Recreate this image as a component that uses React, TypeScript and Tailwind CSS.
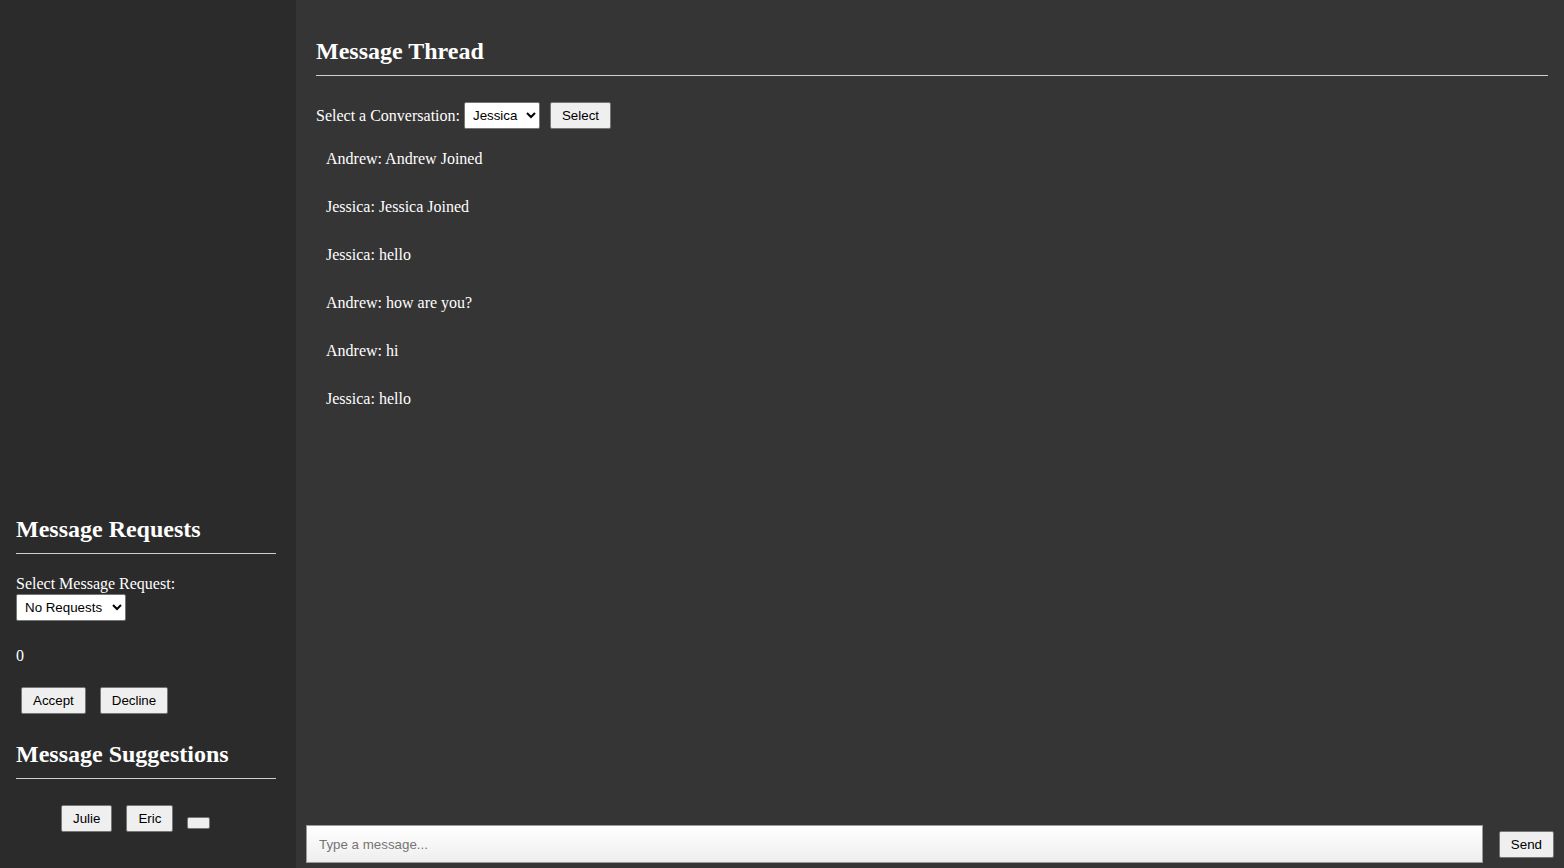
import { useState } from "react";

const serif = "font-['Liberation_Serif','Times_New_Roman',serif]";
const sans = "font-['Liberation_Sans',Arial,sans-serif]";
const btn =
  "bg-[#efefef] border border-[#767676] rounded-[2px] text-black text-[13.333px] leading-[15px] px-[11px] py-[5px] " +
  sans;

const messages = [
  { from: "Andrew", text: "Andrew Joined" },
  { from: "Jessica", text: "Jessica Joined" },
  { from: "Jessica", text: "hello" },
  { from: "Andrew", text: "how are you?" },
  { from: "Andrew", text: "hi" },
  { from: "Jessica", text: "hello" },
];

export default function App() {
  const [draft, setDraft] = useState("");

  return (
    <div className={`flex h-screen w-full overflow-hidden text-white ${serif}`}>
      <aside className="w-[296px] shrink-0 bg-[#2b2b2b] flex flex-col justify-end pl-4 pr-5 pb-[36px]">
        <h2 className="text-2xl font-bold leading-7 pb-[10px] border-b border-[#cfcfcf]">Message Requests</h2>
        <label className="block mt-[21px] text-base leading-[18px]">Select Message Request:</label>
        <select
          className={`mt-[1px] w-[110px] h-[27px] bg-white text-black border border-[#767676] rounded-[2px] text-[13.333px] px-1 ${sans}`}
        >
          <option>No Requests</option>
        </select>
        <p className="mt-[26px] text-base leading-[18px]">0</p>
        <div className="flex items-center gap-[14px] ml-[5px] mt-[22px]">
          <button className={btn}>Accept</button>
          <button className={btn}>Decline</button>
        </div>
        <h2 className="mt-[26px] text-2xl font-bold leading-7 pb-[10px] border-b border-[#cfcfcf]">Message Suggestions</h2>
        <div className="flex items-end gap-[14px] pl-[45px] mt-[26px]">
          <button className={btn}>Julie</button>
          <button className={btn}>Eric</button>
          <button className="bg-[#efefef] border border-[#767676] rounded-[2px] w-[23px] h-[12px] mb-[3px]" />
        </div>
      </aside>

      <main className="flex-1 bg-[#353535] flex flex-col">
        <div className="flex-1 pl-5 pr-4 pt-[37px]">
          <h2 className="text-2xl font-bold leading-7 pb-[10px] border-b border-[#cfcfcf]">Message Thread</h2>
          <div className="flex items-center mt-[26px] text-base">
            <span>Select a Conversation:</span>
            <select
              className={`ml-[4px] w-[76px] h-[27px] bg-white text-black border border-[#767676] rounded-[2px] text-[13.333px] px-1 ${sans}`}
            >
              <option>Jessica</option>
            </select>
            <button className={`${btn} ml-[10px]`}>Select</button>
          </div>
          <div className="mt-[21px] pl-[10px] flex flex-col gap-[30px]">
            {messages.map((m, i) => (
              <p key={i} className="text-base leading-[18px]">
                {m.from}: {m.text}
              </p>
            ))}
          </div>
        </div>
        <div className="flex items-center gap-4 pl-[10px] pr-[10px] pb-[5px]">
          <input
            value={draft}
            onChange={(e) => setDraft(e.target.value)}
            placeholder="Type a message..."
            className={`flex-1 h-[38px] px-3 border border-[#9a9a9a] bg-gradient-to-b from-white to-[#eeeeee] text-black text-[13.333px] placeholder:text-[#757575] outline-none ${sans}`}
          />
          <button className={btn}>Send</button>
        </div>
      </main>
    </div>
  );
}
